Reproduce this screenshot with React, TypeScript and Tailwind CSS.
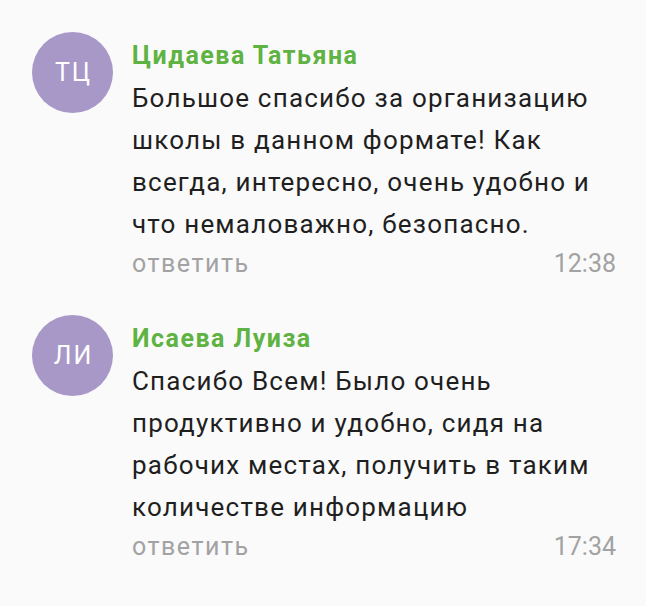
const COMMENTS = [
  {
    initials: "ТЦ",
    name: "Цидаева Татьяна",
    text: "Большое спасибо за организацию школы в данном формате! Как всегда, интересно, очень удобно и что немаловажно, безопасно.",
    time: "12:38",
  },
  {
    initials: "ЛИ",
    name: "Исаева Луиза",
    text: "Спасибо Всем! Было очень продуктивно и удобно, сидя на рабочих местах, получить в таким количестве информацию",
    time: "17:34",
  },
];

function Comment({ c }: { c: (typeof COMMENTS)[number] }) {
  return (
    <div className="flex gap-[19px]">
      <div className="flex size-[81px] shrink-0 items-center justify-center rounded-full bg-[#a898c8] pl-[2px] text-[25px] tracking-[2px] text-white">
        {c.initials}
      </div>
      <div className="min-w-0 flex-1">
        <p className="mt-[8px] text-[25px] font-bold leading-[32px] tracking-[1.5px] text-[#5eb342]">{c.name}</p>
        <p className="mt-[5px] text-[26px] leading-[42px] tracking-[1.2px] text-[#1f1f1f]">{c.text}</p>
        <div className="mt-[3px] flex items-center justify-between text-[25px] leading-[32px] text-[#a2a2a2]">
          <span className="tracking-[1.5px]">ответить</span>
          <span>{c.time}</span>
        </div>
      </div>
    </div>
  );
}

export default function App() {
  return (
    <div
      className="flex h-[606px] w-[646px] flex-col gap-[35px] bg-[#fafafa] pl-[32px] pr-[30px] pt-[32px]"
      style={{ fontFamily: "Roboto, 'Noto Sans', sans-serif" }}
    >
      {COMMENTS.map((c) => (
        <Comment key={c.name} c={c} />
      ))}
    </div>
  );
}
